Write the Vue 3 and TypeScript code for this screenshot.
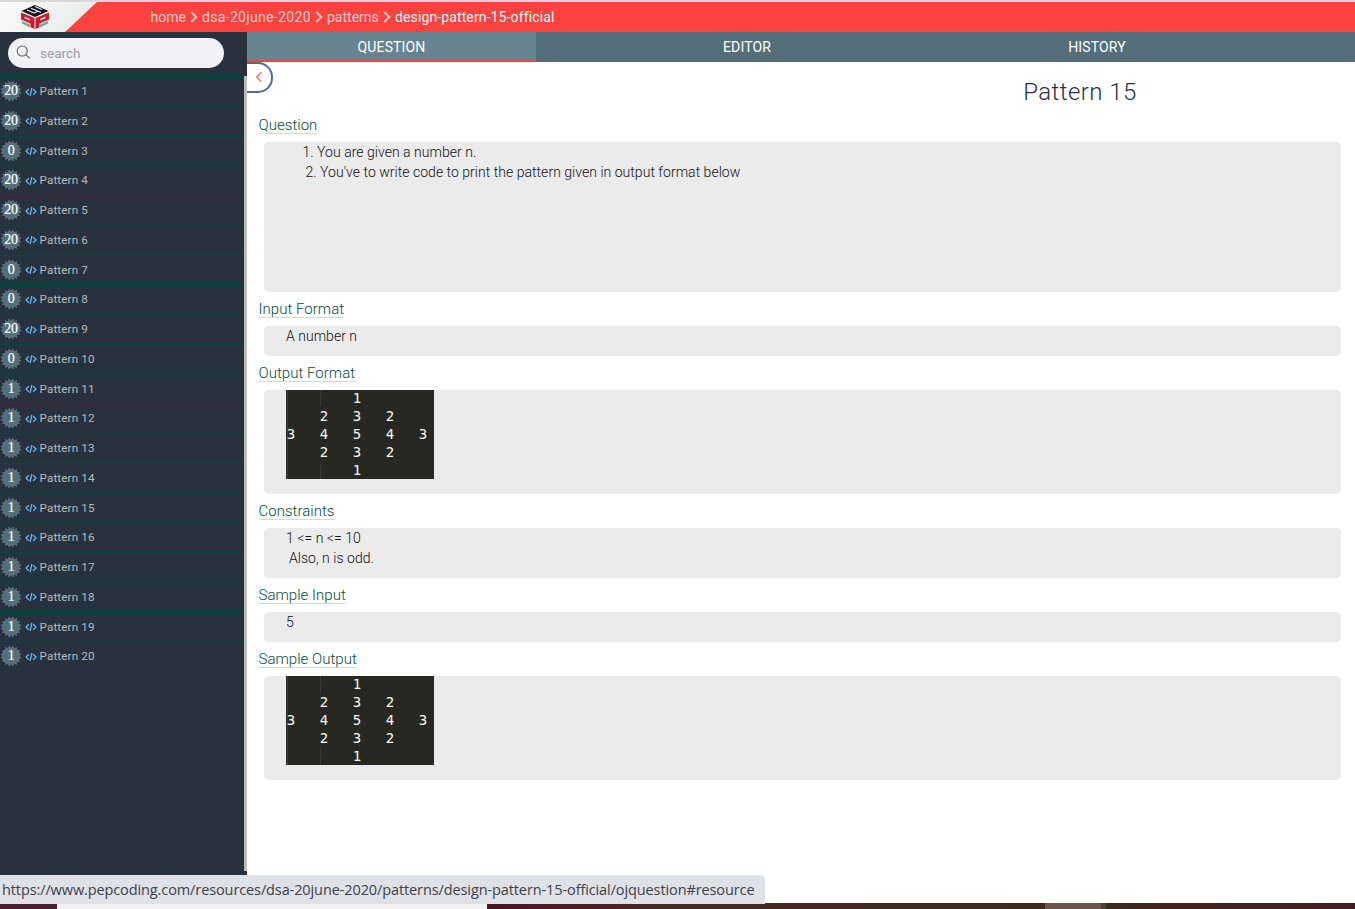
<script setup lang="ts">
interface Section {
  title: string
  kind: 'list' | 'text' | 'pattern'
  size: string
  lines: string[]
}

const crumbs: { label: string; cls: string }[] = [
  { label: 'home', cls: 'c-home' },
  { label: 'dsa-20june-2020', cls: 'c-course' },
  { label: 'patterns', cls: 'c-module' },
  { label: 'design-pattern-15-official', cls: 'c-current' },
]

const points: number[] = [20, 20, 0, 20, 20, 20, 0, 0, 20, 0, 1, 1, 1, 1, 1, 1, 1, 1, 1, 1]

const burst: string = Array.from({ length: 32 }, (_, i) => {
  const r = i % 2 === 0 ? 10.8 : 8.5
  const a = (Math.PI * (i + 1)) / 16
  return `${(11 + r * Math.cos(a)).toFixed(2)},${(11 + r * Math.sin(a)).toFixed(2)}`
}).join(' ')

const grid: string[] = [
  '', '', '1', '', '',
  '', '2', '3', '2', '',
  '3', '4', '5', '4', '3',
  '', '2', '3', '2', '',
  '', '', '1', '', '',
]

const sections: Section[] = [
  {
    title: 'Question',
    kind: 'list',
    size: 'h150',
    lines: ['1. You are given a number n.', "2. You've to write code to print the pattern given in output format below"],
  },
  { title: 'Input Format', kind: 'text', size: 'h30', lines: ['A number n'] },
  { title: 'Output Format', kind: 'pattern', size: 'h104', lines: [] },
  { title: 'Constraints', kind: 'text', size: 'h50', lines: ['1 <= n <= 10', 'Also, n is odd.'] },
  { title: 'Sample Input', kind: 'text', size: 'h30', lines: ['5'] },
  { title: 'Sample Output', kind: 'pattern', size: 'h104', lines: [] },
]
</script>

<template>
  <div class="page">
    <div class="topline"></div>
    <header class="header">
      <div class="brand">
        <svg class="logo" width="30" height="27" viewBox="0 0 30 27">
          <path d="M2 18 10 21.500V24.500L2 20.500Z" fill="#6bb08b" />
          <path d="M28 18 20 21.500V24.500L28 20.500Z" fill="#6bb08b" />
          <path d="M1.500 8 15 2 28.500 8 15 14Z" fill="#15151d" />
          <path d="M7 7 14 10M11 5.200 21 9.600M15 3.500 22 6.600M14 10 17.800 8.200" fill="none" stroke="#eceeed" stroke-width="1.100" />
          <path d="M1 9.500 14.500 15V26L10.500 24.200V20.600L1 16.600Z" fill="#cf1730" />
          <path d="M29 9.500 15.500 15V26L19.500 24.200V20.600L29 16.600Z" fill="#d8142d" />
          <path d="M4.500 13.600 10 15.900V17.500L4.500 15.200Z" fill="#f4e9e9" />
          <path d="M25.500 13.600 20 15.900V17.500L25.500 15.200Z" fill="#f4e9e9" />
        </svg>
      </div>
      <nav class="crumbs">
        <template v-for="(c, i) in crumbs" :key="c.label">
          <svg v-if="i > 0" class="sep" width="8" height="12" viewBox="0 0 8 12">
            <path d="M1.300 1 6.300 6 1.300 11" fill="none" stroke="#fcc4c2" stroke-width="2" />
          </svg>
          <a :class="c.cls">{{ c.label }}</a>
        </template>
      </nav>
    </header>

    <div class="body">
      <aside class="sidebar">
        <div class="searchrow">
          <div class="search">
            <svg width="15" height="15" viewBox="0 0 15 15" fill="none" stroke="#62666d" stroke-width="1.100">
              <circle cx="6.200" cy="6" r="5" />
              <path d="M9.800 9.600 13.800 13.300" />
            </svg>
            <span>search</span>
          </div>
        </div>
        <div class="scroll">
          <ul class="list">
            <li v-for="(p, i) in points" :key="i">
              <span class="badge">
                <svg width="22" height="22" viewBox="0 0 22 22"><polygon :points="burst" fill="#546e7a" /></svg>
                <b>{{ p }}</b>
              </span>
              <svg class="code" width="12" height="10" viewBox="0 0 12 10" fill="none" stroke="#64b5f6" stroke-width="1.300">
                <path d="M3.800 2.200 1 5 3.800 7.800M8.200 2.200 11 5 8.200 7.800M6.900 1 5.100 9" />
              </svg>
              <span class="name">Pattern {{ i + 1 }}</span>
            </li>
          </ul>
          <div class="thumb"></div>
        </div>
      </aside>

      <main class="main">
        <div class="tabs">
          <div class="tab active">QUESTION</div>
          <div class="tab editor">EDITOR</div>
          <div class="tab history">HISTORY</div>
        </div>
        <div class="collapse">
          <svg width="8" height="12" viewBox="0 0 8 12"><path d="M6.500 1.200 1.700 6 6.500 10.800" fill="none" stroke="#ff6f61" stroke-width="1.500" /></svg>
        </div>
        <h1 class="title">Pattern 15</h1>
        <section v-for="s in sections" :key="s.title" class="section">
          <h2><span>{{ s.title }}</span></h2>
          <div class="box" :class="[s.kind, s.size]">
            <div v-if="s.kind === 'pattern'" class="shot">
              <div class="cells">
                <span v-for="(n, i) in grid" :key="i">{{ n }}</span>
              </div>
            </div>
            <p v-for="l in s.lines" v-else :key="l">{{ l }}</p>
          </div>
        </section>
      </main>
    </div>

    <div class="taskbar">
      <i class="t1"></i><i class="t2"></i><i class="t3"></i><i class="t4"></i><i class="t5"></i><i class="t6"></i>
    </div>
    <div class="status">https://www.pepcoding.com/resources/dsa-20june-2020/patterns/design-pattern-15-official/ojquestion#resource</div>
  </div>
</template>

<style>
body {
  margin: 0;
  overflow: hidden;
}
</style>

<style scoped>
.page {
  position: relative;
  width: 1355px;
  height: 909px;
  display: flex;
  flex-direction: column;
  overflow: hidden;
  background: #fff;
  font-family: Roboto, 'Liberation Sans', sans-serif;
}
.topline {
  height: 2px;
  flex: none;
  background: #d8d7dc;
}
.header {
  height: 30px;
  flex: none;
  display: flex;
  background: #fa423e;
}
.brand {
  width: 97px;
  height: 30px;
  background: linear-gradient(135deg, #fafbfa, #e5e8e6);
  clip-path: polygon(0 0, 100% 0, 65px 100%, 0 100%);
}
.logo {
  display: block;
  margin: 1px 0 0 20px;
}
.crumbs {
  display: flex;
  align-items: center;
  margin-left: 53.500px;
  font-size: 14px;
  color: #fccfcd;
  white-space: nowrap;
}
.crumbs a {
  line-height: 30px;
}
.sep {
  margin: 0 4px;
}
.c-home {
  width: 35.500px;
}
.c-course {
  width: 109px;
  letter-spacing: 0.33px;
}
.c-module {
  width: 52px;
}
.c-current {
  color: #fff;
  letter-spacing: 0.12px;
}
.body {
  height: 871px;
  flex: none;
  display: flex;
}
.sidebar {
  width: 247px;
  height: 844px;
  flex: none;
  display: flex;
  flex-direction: column;
  background: #28323e;
}
.searchrow {
  height: 44px;
  flex: none;
  padding: 6px 0 0 8px;
  box-sizing: border-box;
}
.search {
  width: 216px;
  height: 30px;
  border-radius: 15px;
  background: #f2f1f6;
  display: flex;
  align-items: center;
  box-sizing: border-box;
  padding-left: 8px;
  gap: 9px;
  font-size: 13.5px;
  color: #9d9d9f;
}
.search svg {
  margin-top: -1px;
}
.scroll {
  display: flex;
  justify-content: space-between;
}
.list {
  width: 243px;
  margin: 0;
  padding: 0;
  list-style: none;
}
.list li {
  height: 29.75px;
  box-sizing: border-box;
  padding-bottom: 0.500px;
  border-top: 1px solid #004d40;
  display: flex;
  align-items: center;
}
.badge {
  width: 22px;
  height: 22px;
  display: grid;
  place-items: center;
}
.badge > * {
  grid-area: 1 / 1;
}
.badge b {
  font: 400 14px/22px 'Liberation Serif', serif;
  -webkit-text-stroke: 0.2px #fff;
  color: #fff;
  letter-spacing: -0.3px;
}
.code {
  margin: 1px 2.500px 0 3px;
}
.name {
  font-size: 11.700px;
  line-height: 14px;
  color: #b6babd;
  letter-spacing: 0.12px;
}
.thumb {
  width: 3px;
  height: 795px;
  background: #c0bcbc;
}
.main {
  flex: 1;
  display: flex;
  flex-direction: column;
}
.tabs {
  height: 30px;
  flex: none;
  display: flex;
  background: #546e7a;
  color: #fff;
  font-size: 14px;
  letter-spacing: 0.15px;
}
.tab {
  line-height: 30px;
  text-align: center;
}
.active {
  width: 289px;
  height: 30px;
  box-sizing: border-box;
  background: #678491;
  border-bottom: 2px solid #fa423e;
}
.editor {
  width: 422px;
}
.history {
  width: 278px;
}
.collapse {
  width: 26px;
  height: 31px;
  flex: none;
  box-sizing: border-box;
  border: 2px solid #546e7a;
  border-left: 0;
  border-radius: 0 15px 15px 0;
  display: flex;
  align-items: center;
  padding: 0 0 2px 8px;
}
.title {
  width: 200px;
  height: 30px;
  margin: -16px 0 1px 733px;
  text-align: center;
  font-weight: 300;
  font-size: 24px;
  line-height: 30px;
  letter-spacing: 0.45px;
  color: #28323e;
}
.section h2 {
  height: 34px;
  margin: 0 0 0 11.500px;
  font-weight: 300;
  font-size: 15px;
  line-height: 34px;
  letter-spacing: 0.03px;
  color: #004d40;
}
.section h2 span {
  display: inline-block;
  line-height: 15px;
  border-bottom: 1px solid #c8e2cc;
}
.box {
  width: 1077px;
  margin-left: 17px;
  box-sizing: border-box;
  padding-left: 22px;
  border-radius: 5px;
  background: #ebebeb;
  font-weight: 300;
  font-size: 14px;
  letter-spacing: 0.03px;
  color: #111;
}
.box p {
  margin: 0;
  line-height: 20px;
}
.box p + p {
  padding-left: 3px;
}
.box.list {
  width: 1077px;
  margin-left: 17px;
  padding-left: 38.500px;
}
.h150 {
  height: 150px;
}
.h104 {
  height: 104px;
}
.h50 {
  height: 50px;
}
.h30 {
  height: 30px;
}
.shot {
  width: 148px;
  height: 89px;
  overflow: hidden;
  background:
    linear-gradient(#3b3c36, #3b3c36) 1px 0 / 1px 100% no-repeat,
    linear-gradient(#3b3c36, #3b3c36) 34px 0 / 1px 16px no-repeat,
    linear-gradient(#3b3c36, #3b3c36) 34px 73px / 1px 16px no-repeat,
    #272822;
}
.cells {
  display: grid;
  grid-template-columns: repeat(5, 33px);
  grid-auto-rows: 18px;
  margin: -1px 0 0 -11.500px;
  color: #f8f8f2;
  font: 400 14px/18px 'DejaVu Sans Mono', monospace;
  text-align: center;
}
.taskbar {
  height: 6px;
  flex: none;
  display: flex;
}
.t1 {
  width: 57px;
  background: #4a2030;
}
.t2 {
  width: 430px;
  background: #f2f0f0;
}
.t3 {
  width: 558px;
  background: linear-gradient(90deg, #471621, #472a25 30%, #402a1e);
}
.t4 {
  width: 56px;
  background: #6b564b;
}
.t5 {
  width: 5px;
  background: #4c4039;
}
.t6 {
  flex: 1;
  background: linear-gradient(90deg, #40291e, #421f1f);
}
.status {
  position: absolute;
  left: 0;
  top: 875px;
  width: 765px;
  height: 29px;
  box-sizing: border-box;
  padding-left: 2px;
  border-radius: 0 5px 0 0;
  background: #dee1e6;
  color: #3f4246;
  font: 400 14.500px/29px 'Open Sans', 'Noto Sans', sans-serif;
  letter-spacing: -0.105px;
  white-space: nowrap;
}
</style>
